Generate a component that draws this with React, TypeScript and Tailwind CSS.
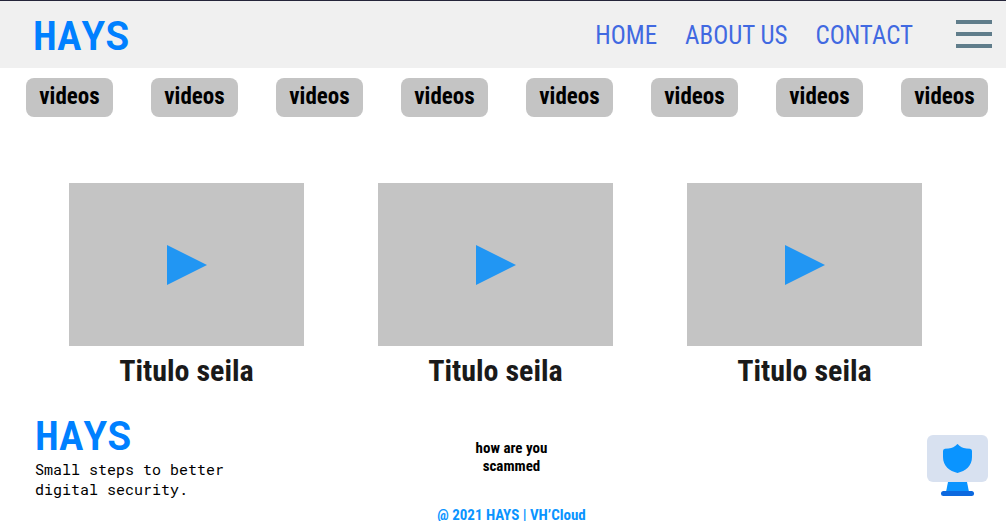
const links = ["HOME", "ABOUT US", "CONTACT"];
const categories = Array.from({ length: 8 }, () => "videos");
const videos = Array.from({ length: 3 }, () => "Titulo seila");

function Logo() {
  return (
    <a
      href="#"
      className="block font-['Roboto_Mono','Roboto',sans-serif] text-[40px] leading-10 font-bold text-[#0080ff]"
    >
      HAYS
    </a>
  );
}

function VideoCard({ title }: { title: string }) {
  return (
    <article className="flex-1 text-center">
      <button
        type="button"
        aria-label={`Play ${title}`}
        className="flex h-[163px] w-full items-center justify-center bg-[#c4c4c4]"
      >
        <svg viewBox="0 0 40 40" className="size-10" fill="#2196f3">
          <path d="M0 0 40 20 0 40Z" />
        </svg>
      </button>
      <h2 className="pt-2 text-[30px] leading-[34px] font-bold text-[#1a1a1a]">{title}</h2>
    </article>
  );
}

function ShieldMonitor() {
  return (
    <svg viewBox="0 0 61 62" className="h-[62px] w-[61px]" aria-hidden="true">
      <rect width="61" height="47" rx="6" fill="#d8e1f0" />
      <path d="M21 47h19l2 10H19Z" fill="#0a94ff" />
      <rect x="14" y="56" width="33" height="5" rx="2.5" fill="#0c69df" />
      <path
        d="M30.500 9C31.500 9 32.500 13.700 43 13.800Q45 14 45 16V22C45 31 38.500 36 30.500 38C22.500 36 16 31 16 22V16Q16 14 18 13.800C28.500 13.700 29.500 9 30.500 9Z"
        fill="#0a94ff"
      />
    </svg>
  );
}

export default function App() {
  return (
    <div className="bg-white font-['Roboto_Condensed','Roboto',sans-serif] text-black">
      <header className="flex h-[68px] items-center border-t border-[#25253a] bg-[#f0f0f0] pr-[14px] pl-[33px]">
        <Logo />
        <nav className="ml-auto flex gap-7 pt-[2px] text-[25px] leading-8 text-[#4169e1]">
          {links.map((link) => (
            <a key={link} href="#">
              {link}
            </a>
          ))}
        </nav>
        <button type="button" aria-label="Menu" className="ml-[43px] flex flex-col gap-2 pb-px">
          <span className="h-1 w-9 bg-[#607d8b]" />
          <span className="h-1 w-9 bg-[#607d8b]" />
          <span className="h-1 w-9 bg-[#607d8b]" />
        </button>
      </header>

      <main>
        <div className="flex justify-between pt-[10px] pr-[18px] pl-[26px]">
          {categories.map((category, i) => (
            <button
              key={i}
              type="button"
              className="h-[39px] w-[87px] rounded-lg bg-[#c4c4c4] pb-[2px] text-[23px] leading-9 font-bold"
            >
              {category}
            </button>
          ))}
        </div>
        <section className="flex gap-[74px] pt-[66px] pr-[84px] pl-[69px]">
          {videos.map((title, i) => (
            <VideoCard key={i} title={title} />
          ))}
        </section>
      </main>

      <footer className="grid grid-cols-[1fr_auto_1fr] pt-[27px] pr-[18px] pl-[35px]">
        <div>
          <Logo />
          <p className="w-[200px] pt-1 font-['Roboto_Mono','Liberation_Mono',monospace] text-[15px] leading-5">
            Small steps to better digital security.
          </p>
        </div>
        <div className="flex flex-col items-center pt-6 text-center text-[15px] leading-[18px] font-bold">
          <p className="w-20">how are you scammed</p>
          <p className="pt-[31px] text-[#0a94ff]">@ 2021 HAYS | VH’Cloud</p>
        </div>
        <div className="flex items-start justify-end pt-5">
          <ShieldMonitor />
        </div>
      </footer>
    </div>
  );
}
